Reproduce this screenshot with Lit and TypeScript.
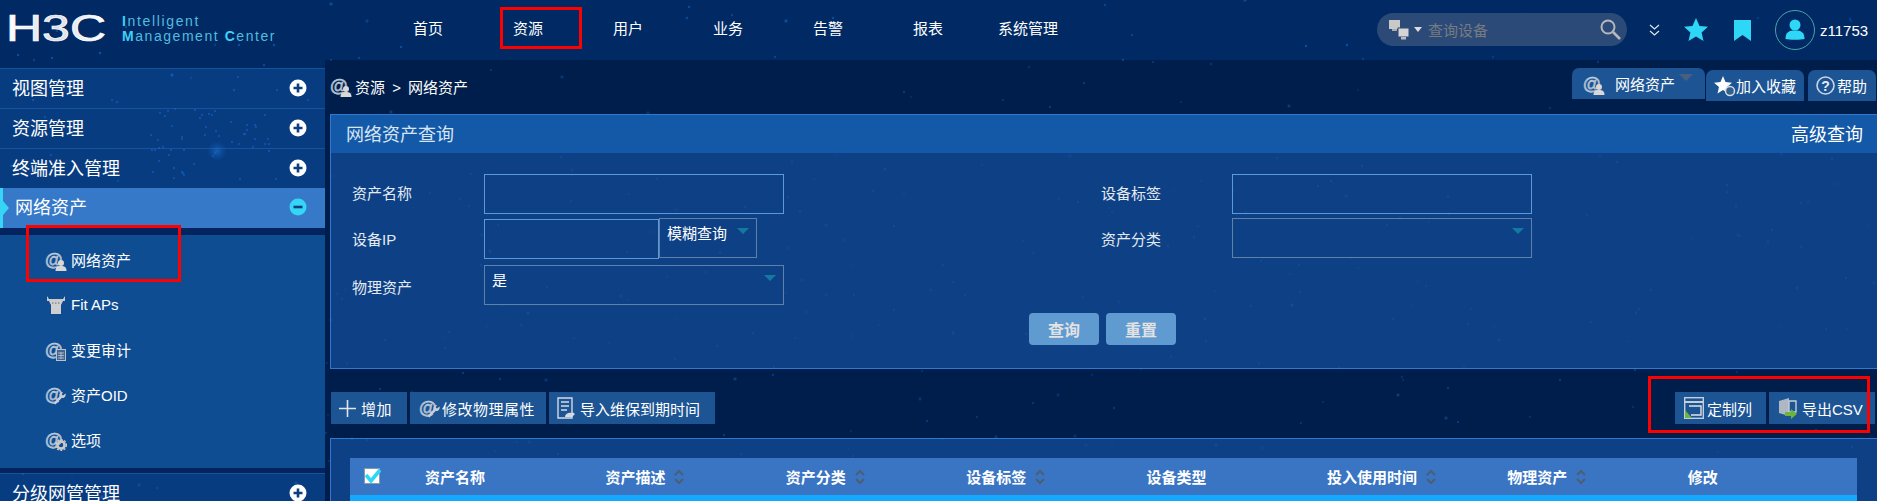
import { LitElement, html, css, svg } from "lit";
import { customElement } from "lit/decorators.js";

function stars() {
  let s = 12345;
  const r = () => ((s = (s * 1664525 + 1013904223) >>> 0) / 4294967296);
  const out: any[] = [];
  for (let i = 0; i < 420; i++) {
    const big = r() < 0.2;
    out.push(svg`<circle cx=${(r() * 1877).toFixed(0)} cy=${(r() * 501).toFixed(0)} r=${big ? 2.4 : 1.2} fill=${big ? "url(#glow)" : "#0d56ad"} opacity=${(0.45 + r() * 0.5).toFixed(2)}></circle>`);
  }
  for (let i = 0; i < 50; i++) {
    out.push(svg`<circle cx=${(150 + r() * 130).toFixed(0)} cy=${(110 + r() * 70).toFixed(0)} r="1.2" fill="#1266c8" opacity="0.6"></circle>`);
  }
  out.push(svg`<circle cx="217" cy="151" r="10" fill="url(#glow)" opacity="0.7"></circle>`);
  return out;
}

const atIcon = (badge: any) => html`<svg class="ic" width="22" height="22" viewBox="0 0 22 22">
  <text x="0" y="16.500" font-size="18" font-weight="700" font-family="Liberation Sans" fill="#a7b5c8" stroke="#dfe6ee" stroke-width=".3">@</text>${badge}</svg>`;
const bPerson = svg`<circle cx="16" cy="14" r="3" fill="#d8d8d8"></circle><path d="M10.500 22c0-4 2-5 5.500-5s5.500 1 5.500 5z" fill="#d8d8d8"></path>`;
const bCalc = svg`<rect x="11.500" y="10.500" width="9" height="11" fill="#44658f" stroke="#b8c2cf"></rect><path d="M13 14h6M13 16.500h6M13 19h6M16 13v7" stroke="#c4ccd6" stroke-width=".8"></path>`;
const bWrench = svg`<path d="M20.500 9.500a3.500 3.500 0 0 1-4 4.500l-6 6.500-2-1.500 6-6.500a3.500 3.500 0 0 1 3.500-4.500l-1.500 2.500 1.500 1z" fill="#c6ced8"></path>`;
const bGear = svg`<circle cx="16" cy="16" r="3.600" fill="none" stroke="#c9c9c9" stroke-width="2.600"></circle><circle cx="16" cy="16" r="5.400" fill="none" stroke="#c9c9c9" stroke-width="1.400" stroke-dasharray="2 1.500"></circle>`;

const circleIcon = (minus: boolean) => html`<svg class="ci" width="18" height="18" viewBox="0 0 18 18">
  <circle cx="9" cy="9" r="8.500" fill=${minus ? "#35d5f6" : "#fff"}></circle>
  <path d=${minus ? "M4.500 9h9" : "M4.500 9h9M9 4.500v9"} stroke="#0d3f80" stroke-width="2.600"></path></svg>`;

const sortIcon = html`<svg class="sort" width="10" height="16" viewBox="0 0 10 16"><path d="M1 6l4-4 4 4M1 10l4 4 4-4" fill="none" stroke="#4d5d74" stroke-width="2"></path></svg>`;

@customElement("app-root")
export class AppRoot extends LitElement {
  static styles = css`
    :host { display: block; position: relative; width: 1877px; height: 501px; overflow: hidden; background: #012a64; color: #fff; font-family: "Liberation Sans", "Noto Sans CJK SC", sans-serif; font-size: 15px; }
    .sky { position: absolute; inset: 0; }
    .page { position: relative; display: flex; flex-direction: column; height: 501px; }
    .red { position: absolute; border: 3px solid #fe0000; box-sizing: border-box; pointer-events: none; }

    header { display: flex; height: 60px; flex: none; }
    .logo { width: 378px; flex: none; display: flex; align-items: flex-start; padding: 7px 0 0 6px; box-sizing: border-box; gap: 16px; }
    .logo svg { flex: none; }
    .tag { color: #52bcdf; display: flex; flex-direction: column; white-space: nowrap; font-size: 14px; line-height: 15px; padding-top: 7px; }
    .tag b { color: #3ed0f5; }
    .tag .l1 { letter-spacing: 1.65px; }
    .tag .l2 { letter-spacing: 1.55px; }
    nav { display: flex; height: 60px; }
    .nav { width: 100px; text-align: center; line-height: 58px; position: relative; }
    .nav .red { left: 22px; top: 7px; width: 82px; height: 42px; }
    .tools { margin-left: 299px; display: flex; align-items: center; height: 60px; }
    .search { width: 250px; height: 33px; margin-top: -1px; border-radius: 17px; background: #2c4a78; display: flex; align-items: center; box-sizing: border-box; padding: 0 6px 0 12px; color: #767b82; flex: none; }
    .search .ph { margin-left: 6px; flex: 1; }
    .search .drop { width: 0; height: 0; border: 4px solid transparent; border-top: 5px solid #ddd; border-bottom: 0; margin-left: 5px; }
    .dbl { margin-left: 22px; }
    .star { margin-left: 24px; }
    .mark { margin-left: 26px; }
    .avatar { margin-left: 24px; width: 40px; height: 40px; }
    .user { margin-left: 5px; font-size: 15px; white-space: nowrap; }

    .body { display: flex; flex: 1; min-height: 0; }
    aside { width: 325px; flex: none; padding-top: 8px; box-sizing: border-box; display: flex; flex-direction: column; }
    .item { height: 40px; flex: none; display: flex; align-items: center; justify-content: space-between; padding: 0 18px 4px 12px; box-sizing: border-box; font-size: 18px; background: rgba(20, 90, 175, .38); border-top: 1px solid rgba(40, 110, 190, .45); position: relative; }
    .item .ci { margin-bottom: -2px; }
    .item.on { background: #3779c9; border-top: 0; padding-left: 15px; }
    .item.on::before { content: ""; position: absolute; left: 0; top: 0; bottom: 0; width: 3px; background: #35d5f6; }
    .item.on::after { content: ""; position: absolute; left: 3px; top: 13px; border: 7px solid transparent; border-left: 6px solid #35d5f6; border-right: 0; }
    .gap1 { height: 7px; background: #03245e; flex: none; }
    .gap2 { height: 5px; background: #03245e; flex: none; }
    .sub { height: 233px; flex: none; background: #0f4d93; padding-top: 2px; box-sizing: border-box; }
    .sub-i { height: 45px; display: flex; align-items: center; padding-left: 45px; gap: 4px; font-size: 15px; position: relative; }
    .sub-i .red { left: 26px; top: -12px; width: 155px; height: 57px; }

    main { flex: 1; min-width: 0; background: rgba(1, 5, 29, .32); padding-left: 5px; display: flex; flex-direction: column; }
    .crumbs { height: 54px; flex: none; display: flex; justify-content: space-between; align-items: flex-start; padding: 8px 1px 0 0; box-sizing: border-box; }
    .path { display: flex; align-items: center; gap: 3px; height: 36px; word-spacing: 3px; }
    .tabs { display: flex; align-items: flex-start; }
    .tab { background: #1c5494; border-radius: 7px 7px 0 0; height: 31px; display: flex; align-items: center; box-sizing: border-box; position: relative; margin-top: 2px; white-space: nowrap; }
    .tab.cur { margin-top: 0; width: 133px; padding-left: 11px; gap: 10px; margin-right: 1px; }
    .tab.cur::after { content: ""; position: absolute; left: 107px; top: 6px; border: 7px solid transparent; border-top: 7px solid #4a5f7b; border-bottom: 0; }
    .tab.fav { width: 98px; padding-left: 7px; gap: 0; margin-right: 4px; }
    .tab.help { width: 68px; padding-left: 8px; gap: 2px; }

    .panel { border: 1px solid #2f7ad0; border-right: 0; background: rgba(22, 86, 168, .62); height: 255px; box-sizing: border-box; flex: none; }
    .ptitle { height: 38px; background: #1459a8; display: flex; justify-content: space-between; align-items: center; padding: 0 14px 2px 15px; box-sizing: border-box; font-size: 18px; color: #d7e5f3; }
    .ptitle span:last-child { color: #fff; }
    .form { display: grid; grid-template-columns: 153px 300px 317px 131px 300px; grid-template-rows: 45px 46px 40px; margin-top: 21px; }
    .lab { padding-left: 21px; line-height: 40px; color: #e4ebf3; }
    .lab.r { padding-left: 0; }
    .lab.mid { line-height: 42px; }
    .lab.low { line-height: 46px; }
    .inp { height: 40px; box-sizing: border-box; border: 1px solid #5a9ad6; }
    .combo { display: flex; }
    .combo .inp { width: 175px; flex: none; }
    .sel { height: 40px; box-sizing: border-box; border: 1px solid #5f80a8; position: relative; padding: 0 7px; line-height: 29px; }
    .sel::after { content: ""; position: absolute; right: 7px; top: 9px; border: 6px solid transparent; border-top: 6px solid #14799f; border-bottom: 0; }
    .combo .sel { width: 98px; margin-top: -1px; }
    .up { margin-top: -1px; }
    .acts { display: flex; gap: 7px; padding-left: 698px; margin-top: 8px; }
    .btn { width: 70px; height: 32px; border-radius: 4px; background: #5f9ad0; color: #e2e2e2; font-size: 16px; font-weight: 700; display: flex; align-items: center; justify-content: center; }

    .bar { display: flex; justify-content: space-between; margin-top: 23px; padding: 0 2px 0 1px; flex: none; }
    .group { display: flex; gap: 3px; position: relative; }
    .tb { height: 32px; background: #1c5494; display: flex; align-items: center; box-sizing: border-box; white-space: nowrap; padding-left: 8px; gap: 5px; }
    .tb.add { width: 76px; }
    .tb.add span { letter-spacing: .5px; }
    .tb.mod { width: 136px; gap: 1px; padding-left: 9px; }
    .tb.mod span { letter-spacing: .5px; }
    .tb.imp { width: 166px; }
    .tb.col { width: 91px; padding-left: 9px; gap: 3px; }
    .tb.csv { width: 106px; padding-left: 9px; gap: 2px; }
    .group .red { left: -27px; right: 5px; top: -16px; bottom: -9px; }

    .tpanel { margin-top: 14px; flex: 1; min-height: 0; border-top: 1px solid #2f7ad0; border-left: 1px solid #2f7ad0; background: rgba(22, 86, 168, .62); padding: 19px 20px 0 19px; overflow: hidden; }
    .thead { height: 37px; background: #3a75c4; display: grid; grid-template-columns: 75px repeat(8, 180.400px); align-items: center; font-weight: 700; }
    .th { display: flex; align-items: center; gap: 9px; white-space: nowrap; }
    .chk { padding-left: 14px; }
    .row1 { height: 10px; background: #14a9ff; }
    .ic { flex: none; }
  `;

  render() {
    return html`
      <svg class="sky" width="1877" height="501"><defs><radialGradient id="glow"><stop offset="0" stop-color="#1a7de0"></stop><stop offset="1" stop-color="#0d56ad" stop-opacity="0"></stop></radialGradient></defs>${stars()}</svg>
      <div class="page">
        <header>
          <div class="logo">
            <svg width="100" height="44" viewBox="0 0 100 44"><defs><linearGradient id="lg" x1="0" x2="1"><stop offset="0" stop-color="#fff"></stop><stop offset=".5" stop-color="#d8dde6"></stop><stop offset="1" stop-color="#fff"></stop></linearGradient></defs><text x="0" y="34" font-family="Liberation Sans" font-size="36" fill="url(#lg)" stroke="#fff" stroke-width=".7" textLength="100" lengthAdjust="spacingAndGlyphs">H3C</text></svg>
            <div class="tag"><span class="l1"><b>I</b>ntelligent</span><span class="l2"><b>M</b>anagement <b>C</b>enter</span></div>
          </div>
          <nav>
            <div class="nav">首页</div>
            <div class="nav">资源<div class="red"></div></div>
            <div class="nav">用户</div>
            <div class="nav">业务</div>
            <div class="nav">告警</div>
            <div class="nav">报表</div>
            <div class="nav">系统管理</div>
          </nav>
          <div class="tools">
            <div class="search">
              <svg width="20" height="20" viewBox="0 0 20 20"><rect x="0" y="0" width="11" height="9" fill="#c9c9c9"></rect><path d="M3 9h5v2H3z" fill="#aaa"></path><rect x="9" y="8" width="11" height="9" fill="#d4d4d4" stroke="#2c4a78"></rect><path d="M12 17h5v2.500h-5z" fill="#bbb"></path></svg>
              <span class="drop"></span>
              <span class="ph">查询设备</span>
              <svg width="21" height="21" viewBox="0 0 21 21"><circle cx="8" cy="8" r="6.500" fill="none" stroke="#b4b7bb" stroke-width="2"></circle><path d="M13 13l7 7" stroke="#b4b7bb" stroke-width="2.600"></path></svg>
            </div>
            <svg class="dbl" width="11" height="12" viewBox="0 0 11 12"><path d="M1 1l4.500 4 4.500-4M1 7l4.500 4 4.500-4" fill="none" stroke="#dfe6ee" stroke-width="1.200"></path></svg>
            <svg class="star" width="24" height="24" viewBox="0 0 24 24"><path d="M12 0l3.500 8 8.500.8-6.400 5.700 1.900 8.500L12 18.500 4.500 23l1.900-8.500L0 8.800 8.500 8z" fill="#2fd7f7"></path></svg>
            <svg class="mark" width="17" height="21" viewBox="0 0 17 21"><path d="M0 0h17v21l-8.500-6L0 21z" fill="#2fd7f7"></path></svg>
            <svg class="avatar" viewBox="0 0 40 40"><circle cx="20" cy="20" r="19.500" fill="none" stroke="#4ba3ad"></circle><circle cx="20" cy="15" r="5.500" fill="#2fd7f7"></circle><path d="M10.500 29c0-7 3.500-8.500 9.500-8.500s9.500 1.500 9.500 8.500c-3 1-16 1-19 0z" fill="#2fd7f7"></path></svg>
            <span class="user">z11753</span>
          </div>
        </header>
        <div class="body">
          <aside>
            <div class="item"><span>视图管理</span>${circleIcon(false)}</div>
            <div class="item"><span>资源管理</span>${circleIcon(false)}</div>
            <div class="item"><span>终端准入管理</span>${circleIcon(false)}</div>
            <div class="item on"><span>网络资产</span>${circleIcon(true)}</div>
            <div class="gap1"></div>
            <div class="sub">
              <div class="sub-i">${atIcon(bPerson)}<span>网络资产</span><div class="red"></div></div>
              <div class="sub-i"><svg class="ic" width="22" height="22" viewBox="0 0 22 22"><path d="M2 2v5h18V2l-2 3H4z" fill="#c9c9c9"></path><path d="M4 7h14l-2 4v9H6v-9z" fill="#cfcfcf"></path><path d="M7 9h8" stroke="#5b6b80" stroke-dasharray="1.500 1.500"></path></svg><span>Fit APs</span></div>
              <div class="sub-i">${atIcon(bCalc)}<span>变更审计</span></div>
              <div class="sub-i">${atIcon(bWrench)}<span>资产OID</span></div>
              <div class="sub-i">${atIcon(bGear)}<span>选项</span></div>
            </div>
            <div class="gap2"></div>
            <div class="item"><span>分级网管管理</span>${circleIcon(false)}</div>
          </aside>
          <main>
            <div class="crumbs">
              <div class="path">${atIcon(bPerson)}<span>资源 &gt; 网络资产</span></div>
              <div class="tabs">
                <div class="tab cur">${atIcon(bPerson)}<span>网络资产</span></div>
                <div class="tab fav"><svg class="ic" width="23" height="23" viewBox="0 0 23 23"><path d="M10 2l2.500 6 6.500.7-5 4.300 1.500 6.500-5.500-3.500-5.500 3.500L6 13 1 8.700 7.500 8z" fill="#fff"></path><circle cx="17" cy="17" r="4.500" fill="#33608f" stroke="#d5dce4" stroke-width="1.500"></circle></svg><span>加入收藏</span></div>
                <div class="tab help"><svg class="ic" width="19" height="19" viewBox="0 0 19 19"><circle cx="9.500" cy="9.500" r="8.500" fill="none" stroke="#c9d6e4" stroke-width="1.600"></circle><text x="9.500" y="14.500" text-anchor="middle" font-size="14" font-weight="700" font-family="Liberation Sans" fill="#e4ebf3">?</text></svg><span>帮助</span></div>
              </div>
            </div>
            <section class="panel">
              <div class="ptitle"><span>网络资产查询</span><span>高级查询</span></div>
              <div class="form">
                <div class="lab">资产名称</div><div class="inp"></div><div></div>
                <div class="lab r">设备标签</div><div class="inp"></div>
                <div class="lab mid">设备IP</div>
                <div class="combo"><div class="inp"></div><div class="sel">模糊查询</div></div><div></div>
                <div class="lab r mid">资产分类</div><div class="sel up"></div>
                <div class="lab low">物理资产</div><div class="sel">是</div>
              </div>
              <div class="acts"><div class="btn">查询</div><div class="btn">重置</div></div>
            </section>
            <div class="bar">
              <div class="group">
                <div class="tb add"><svg class="ic" width="17" height="17" viewBox="0 0 17 17"><path d="M0 8.500h17M8.500 0v17" stroke="#dfe6ee" stroke-width="1.600"></path></svg><span>增加</span></div>
                <div class="tb mod">${atIcon(bWrench)}<span>修改物理属性</span></div>
                <div class="tb imp"><svg class="ic" width="18" height="22" viewBox="0 0 18 22"><path d="M1 1h14v20H1z" fill="none" stroke="#d3dae3" stroke-width="1.400"></path><path d="M4 5h8M4 9h8M4 13h6" stroke="#d3dae3" stroke-width="1.400"></path><path d="M8 20c0-3 3-5 8-4l-2-2 4 3-3 3" fill="#d3dae3"></path></svg><span>导入维保到期时间</span></div>
              </div>
              <div class="group">
                <div class="tb col"><svg class="ic" width="20" height="22" viewBox="0 0 20 22"><rect x=".7" y=".7" width="18.600" height="20.600" fill="none" stroke="#c6ced8" stroke-width="1.400"></rect><path d="M1 5h18" stroke="#c6ced8" stroke-width="2"></path><path d="M5 9h12v9H7" fill="none" stroke="#dde3ea" stroke-width="1.400"></path><path d="M1 13l7 8H1z" fill="#6db33f"></path></svg><span>定制列</span></div>
                <div class="tb csv"><svg class="ic" width="22" height="22" viewBox="0 0 22 22"><path d="M1 4l10-3v18L1 16z" fill="#aeb8c4"></path><path d="M11 4h7v11h-7z" fill="none" stroke="#c6ced8" stroke-width="1.400"></path><path d="M7 15h6v-3l6 5-6 5v-3H7z" fill="#6db33f"></path></svg><span>导出CSV</span></div>
                <div class="red"></div>
              </div>
            </div>
            <section class="tpanel">
              <div class="thead">
                <div class="chk"><svg width="18" height="17" viewBox="0 0 18 17" style="display:block"><rect x=".5" y=".5" width="15" height="15" fill="#fff" stroke="#8e98a6"></rect><path d="M2 7l5 6 9-11" fill="none" stroke="#2fd7f7" stroke-width="3.600"></path></svg></div>
                <div class="th">资产名称</div>
                <div class="th">资产描述${sortIcon}</div>
                <div class="th">资产分类${sortIcon}</div>
                <div class="th">设备标签${sortIcon}</div>
                <div class="th">设备类型</div>
                <div class="th">投入使用时间${sortIcon}</div>
                <div class="th">物理资产${sortIcon}</div>
                <div class="th">修改</div>
              </div>
              <div class="row1"></div>
            </section>
          </main>
        </div>
      </div>`;
  }
}
